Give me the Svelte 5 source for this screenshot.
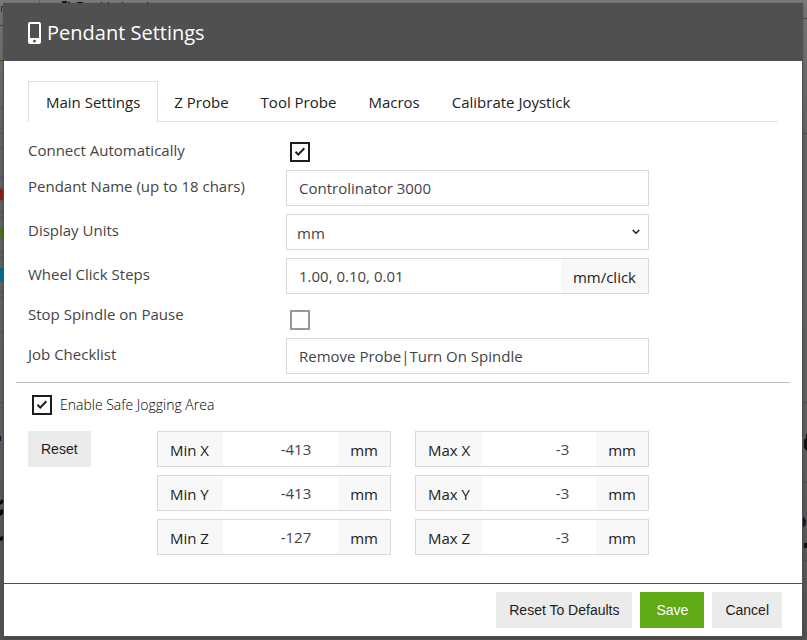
<script>
  const tabs = ['Main Settings', 'Z Probe', 'Tool Probe', 'Macros', 'Calibrate Joystick'];
  let active = $state('Main Settings');
  let connect = $state(true);
  let name = $state('Controlinator 3000');
  let units = $state('mm');
  let steps = $state('1.00, 0.10, 0.01');
  let stopSpindle = $state(false);
  let checklist = $state('Remove Probe|Turn On Spindle');
  let safeArea = $state(true);
  let limits = $state([
    { label: 'Min X', value: '-413' },
    { label: 'Max X', value: '-3' },
    { label: 'Min Y', value: '-413' },
    { label: 'Max Y', value: '-3' },
    { label: 'Min Z', value: '-127' },
    { label: 'Max Z', value: '-3' }
  ]);
</script>

<div class="page">
  <svg class="behind left" width="3" height="640" aria-hidden="true">
    <path d="M0 25.5h3M0 60.5h3" stroke="#2f5a10" />
    <path d="M0 107.5h3M0 133.5h3M0 148.5h3M0 177.5h3M0 212.5h3M0 217.5h3M0 252.5h3M0 257.5h3M0 292.5h3M0 297.5h3M0 332.5h3M0 402.5h3M0 407.5h3M0 482.5h3M0 560.5h3" stroke="#555" />
    <path d="M1 6h2v1h-1v5h-1z" fill="#1d3c5c" />
    <path d="M0 188l3 2v9l-3 2z" fill="#8d1f1b" />
    <path d="M0 228q3 1 3 6v7h-1q0-5-2-7z" fill="#477d05" />
    <path d="M0 268h3v13H0z" fill="#0c6f94" />
    <path d="M0 436h1v5H0z" fill="#0b1836" />
    <path d="M0 501l3-2v4l-3 2zM0 510l3-1v5l-3 2zM0 537l3-1v4l-3 1z" fill="#0a0a0a" />
  </svg>
  <svg class="behind right" width="4" height="640" aria-hidden="true">
    <path d="M0 18.500h4M0 133.500h4M0 402.500h4M0 482.500h4M0 560.500h4" stroke="#4c4c4c" />
    <path d="M4 434h-1v4l-2 2v8l3 3zM4 543h-3v5h3z" fill="#111" />
    <path d="M0 517q3 1 3 5t-3 5z" fill="#0b1836" />
  </svg>
  <svg class="behind top" width="160" height="3" aria-hidden="true">
    <path d="M39.500 0v3" stroke="#666" />
    <path d="M62 1h5v2h-5zM68 2h2v1h-2zM77 2h6v1h-6zM101 2h1v1h-1zM108 2h1v1h-1zM122 2h1v1h-1zM147 2h1v1h-1z" fill="#181818" />
  </svg>

  <div class="dialog" role="dialog" aria-labelledby="title">
    <header>
      <svg width="13" height="22" viewBox="0 0 13 22" aria-hidden="true">
        <path fill="#fff" fill-rule="evenodd" d="M2 0h9a2 2 0 0 1 2 2v18a2 2 0 0 1-2 2H2a2 2 0 0 1-2-2V2a2 2 0 0 1 2-2zM2 2v14h9V2zM6.500 17.800a1.400 1.400 0 1 0 0 2.800a1.400 1.400 0 1 0 0-2.800z" />
      </svg>
      <h1 id="title">Pendant Settings</h1>
    </header>

    <main>
      <div class="tabs" role="tablist">
        {#each tabs as tab}
          <button role="tab" class:active={active === tab} aria-selected={active === tab} onclick={() => (active = tab)}>{tab}</button>
        {/each}
      </div>

      <div class="fields">
        <label class="plain" for="connect">Connect Automatically</label>
        <input id="connect" type="checkbox" bind:checked={connect} />

        <label for="name">Pendant Name (up to 18 chars)</label>
        <input id="name" class="box" type="text" maxlength="18" bind:value={name} />

        <label for="units">Display Units</label>
        <div class="box select">
          <select id="units" bind:value={units}>
            <option value="mm">mm</option>
            <option value="in">in</option>
          </select>
          <svg width="8" height="6" viewBox="0 0 8 6" aria-hidden="true"><path d="M.7 1L4 4.300L7.300 1" fill="none" stroke="#222" stroke-width="1.500" /></svg>
        </div>

        <label for="steps">Wheel Click Steps</label>
        <div class="box group">
          <input id="steps" type="text" bind:value={steps} />
          <span class="addon">mm/click</span>
        </div>

        <label class="plain" for="stop">Stop Spindle on Pause</label>
        <input id="stop" type="checkbox" bind:checked={stopSpindle} />

        <label for="checklist">Job Checklist</label>
        <input id="checklist" class="box" type="text" bind:value={checklist} />
      </div>

      <hr />

      <label class="enable"><input type="checkbox" bind:checked={safeArea} />Enable Safe Jogging Area</label>

      <div class="area">
        <button class="btn">Reset</button>
        <div class="limits">
          {#each limits as limit, i}
            <div class="box group">
              <label class="addon name" for="limit{i}">{limit.label}</label>
              <input id="limit{i}" class="number" type="text" inputmode="numeric" bind:value={limit.value} />
              <span class="addon">mm</span>
            </div>
          {/each}
        </div>
      </div>
    </main>

    <footer>
      <button class="btn">Reset To Defaults</button>
      <button class="btn save">Save</button>
      <button class="btn">Cancel</button>
    </footer>
  </div>
</div>

<style>
  :global(body) {
    margin: 0;
    background: #5b5b5b;
  }
  .page {
    position: relative;
    box-sizing: border-box;
    min-height: 100vh;
    padding: 3px 4px 3px 3px;
    display: flex;
    flex-direction: column;
    overflow: hidden;
    background: linear-gradient(#7a7a7a, #686868 130px, #646464 400px, #555);
    font-family: 'Open Sans', 'Noto Sans', sans-serif;
    font-size: 15px;
    color: #222;
  }
  .behind {
    position: absolute;
    top: 0;
  }
  .left,
  .top {
    left: 0;
  }
  .right {
    right: 0;
  }
  .dialog {
    position: relative;
    flex: 1;
    display: flex;
    flex-direction: column;
    box-sizing: border-box;
    border: 1px solid #505050;
    background: #fff;
    box-shadow: 0 2px 6px rgba(0, 0, 0, 0.25);
  }
  header {
    display: flex;
    align-items: center;
    gap: 6px;
    height: 57px;
    padding: 0 24px;
    background: #505050;
    color: #fff;
  }
  h1 {
    margin: 0;
    font-size: 20px;
    font-weight: 400;
    line-height: 28px;
  }
  main {
    flex: 1;
    padding: 20px 24px 0;
  }
  .tabs {
    display: flex;
    height: 40px;
    border-bottom: 1px solid #dfdfdf;
  }
  .tabs button {
    height: 41px;
    padding: 0 16px;
    border: 0;
    background: none;
    font: inherit;
    color: inherit;
    white-space: nowrap;
  }
  .tabs button.active {
    padding: 0 17px;
    border: 1px solid #dfdfdf;
    border-bottom: 0;
    background: #fff;
  }
  .fields {
    display: grid;
    grid-template-columns: 258px minmax(0, 363px);
    grid-template-rows: 24px 36px 36px 36px 28px 36px;
    row-gap: 8px;
    padding-top: 16px;
  }
  .fields > label {
    line-height: 24px;
    padding-top: 4px;
    color: #444;
  }
  .fields > label.plain {
    padding-top: 0;
  }
  .fields > input[type='checkbox'] {
    align-self: end;
    margin-left: 4px;
  }
  input[type='checkbox'] {
    appearance: none;
    box-sizing: border-box;
    flex: none;
    width: 20px;
    height: 20px;
    margin: 0;
    border: 2px solid #999;
    background: #fff;
  }
  input[type='checkbox']:checked {
    border-color: #1d1d1d;
    background: #fff url("data:image/svg+xml,%3Csvg xmlns='http://www.w3.org/2000/svg' viewBox='0 0 16 16'%3E%3Cpath d='M3.500 7.800l2.800 2.800l6-6.300' fill='none' stroke='%231d1d1d' stroke-width='2'/%3E%3C/svg%3E") center / 16px 16px no-repeat;
  }
  .box {
    box-sizing: border-box;
    width: 100%;
    height: 36px;
    border: 1px solid #d9d9d9;
    background: #fff;
  }
  input,
  select {
    font: inherit;
    color: #444;
  }
  input[type='text'] {
    padding: 0 12px;
    border-radius: 0;
    outline: 0;
  }
  .select {
    display: grid;
    align-items: center;
  }
  .select > * {
    grid-area: 1 / 1;
  }
  .select svg {
    justify-self: end;
    margin-right: 8px;
    pointer-events: none;
  }
  select {
    appearance: none;
    width: 100%;
    height: 34px;
    padding: 2px 10px 0;
    border: 0;
    background: none;
  }
  .group {
    display: flex;
  }
  .group input {
    flex: 1;
    min-width: 0;
    border: 0;
    background: none;
  }
  .addon {
    padding: 2px 12px 0;
    background: #f8f8f8;
    line-height: 32px;
    white-space: nowrap;
  }
  .addon.name {
    box-sizing: border-box;
    min-width: 65px;
  }
  .group .number {
    padding-right: 27px;
    text-align: right;
  }
  hr {
    height: 1px;
    margin: 8px -12px 12px;
    border: 0;
    background: #bfbfbf;
  }
  .enable {
    display: flex;
    align-items: center;
    gap: 8px;
    margin-left: 4px;
    font-size: 14px;
    font-weight: 300;
    line-height: 20px;
    color: #000;
  }
  .area {
    display: flex;
    align-items: flex-start;
    justify-content: space-between;
    max-width: 621px;
    padding-top: 16px;
  }
  .limits {
    display: grid;
    grid-template-columns: 234px 234px;
    gap: 8px 24px;
  }
  .btn {
    height: 36px;
    padding: 0 13px;
    border: 0;
    background: #ebebeb;
    font: 14px 'Liberation Sans', Arial, sans-serif;
    color: #1d1d1d;
    white-space: nowrap;
  }
  .save {
    padding: 0 16px;
    background: #60a917;
    color: #fff;
  }
  footer {
    display: flex;
    justify-content: flex-end;
    gap: 8px;
    padding: 8px 20px;
    border-top: 1px solid #505050;
  }
</style>
